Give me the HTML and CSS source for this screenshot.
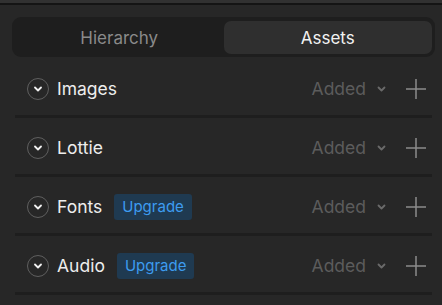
FILE: index.html
```html
<!DOCTYPE html>
<html lang="en">
<head>
    <meta charset="UTF-8">
    <title>Assets</title>
    <link rel="stylesheet" href="styles.css">
</head>
<body>
    <div class="topbar"></div>

    <div class="tabs">
        <div class="tab">Hierarchy</div>
        <div class="tab active">Assets</div>
    </div>

    <div class="list">
        <div class="row">
            <span class="toggle"><svg width="8" height="6" viewBox="0 0 8 6"><path d="M1 1.5 L4 4.5 L7 1.5" /></svg></span>
            <span class="label">Images</span>
            <span class="filter">Added <svg width="9" height="6" viewBox="0 0 9 6"><path d="M1.5 1.5 L4.5 4.5 L7.5 1.5" /></svg></span>
            <span class="add"><svg width="20" height="20" viewBox="0 0 20 20"><path d="M10 0 V20 M0 10 H20" /></svg></span>
        </div>
        <div class="row">
            <span class="toggle"><svg width="8" height="6" viewBox="0 0 8 6"><path d="M1 1.5 L4 4.5 L7 1.5" /></svg></span>
            <span class="label">Lottie</span>
            <span class="filter">Added <svg width="9" height="6" viewBox="0 0 9 6"><path d="M1.5 1.5 L4.5 4.5 L7.5 1.5" /></svg></span>
            <span class="add"><svg width="20" height="20" viewBox="0 0 20 20"><path d="M10 0 V20 M0 10 H20" /></svg></span>
        </div>
        <div class="row">
            <span class="toggle"><svg width="8" height="6" viewBox="0 0 8 6"><path d="M1 1.5 L4 4.5 L7 1.5" /></svg></span>
            <span class="label">Fonts</span>
            <span class="badge">Upgrade</span>
            <span class="filter">Added <svg width="9" height="6" viewBox="0 0 9 6"><path d="M1.5 1.5 L4.5 4.5 L7.5 1.5" /></svg></span>
            <span class="add"><svg width="20" height="20" viewBox="0 0 20 20"><path d="M10 0 V20 M0 10 H20" /></svg></span>
        </div>
        <div class="row">
            <span class="toggle"><svg width="8" height="6" viewBox="0 0 8 6"><path d="M1 1.5 L4 4.5 L7 1.5" /></svg></span>
            <span class="label">Audio</span>
            <span class="badge">Upgrade</span>
            <span class="filter">Added <svg width="9" height="6" viewBox="0 0 9 6"><path d="M1.5 1.5 L4.5 4.5 L7.5 1.5" /></svg></span>
            <span class="add"><svg width="20" height="20" viewBox="0 0 20 20"><path d="M10 0 V20 M0 10 H20" /></svg></span>
        </div>
    </div>
</body>
</html>
```

FILE: styles.css
```css
* {
    margin: 0;
    padding: 0;
    box-sizing: border-box;
}

body {
    font-family: 'Inter', sans-serif;
    background-color: #272727;
    color: #ececec;
    width: 442px;
    height: 305px;
    overflow: hidden;
}

.topbar {
    height: 5px;
    background-color: #313131;
    border-bottom: 2px solid #141414;
}

.tabs {
    display: grid;
    grid-template-columns: 1fr 1fr;
    margin: 12px 7px 0 12px;
    padding: 4px 3px 3px;
    height: 40px;
    background-color: #1e1e1e;
    border-radius: 9px;
}

.tab {
    display: flex;
    align-items: center;
    justify-content: center;
    font-size: 17px;
    color: #8a8a8a;
    border-radius: 7px;
}

.tab.active {
    background-color: #2f2f2f;
    color: #f2f2f2;
}

.list {
    margin: 2px 10px 0 15px;
}

.row {
    display: flex;
    align-items: center;
    height: 59px;
    padding: 3px 6px 0 12px;
    border-bottom: 3px solid #1e1e1e;
}

.toggle {
    display: flex;
    align-items: center;
    justify-content: center;
    width: 22px;
    height: 22px;
    border: 1.5px solid #5f5f5f;
    border-radius: 50%;
    margin-right: 8px;
}

.toggle svg path {
    fill: none;
    stroke: #f0f0f0;
    stroke-width: 1.8;
    stroke-linecap: round;
    stroke-linejoin: round;
}

.label {
    font-size: 17.5px;
    color: #ededed;
}

.badge {
    margin-left: 12px;
    padding: 0 8px;
    height: 26px;
    line-height: 26px;
    font-size: 15px;
    color: #3d9cf0;
    background-color: #1f3a51;
    border-radius: 3px;
}

.filter {
    margin-left: auto;
    display: flex;
    align-items: center;
    gap: 11px;
    font-size: 17.5px;
    color: #5c5c5c;
}

.filter svg path {
    fill: none;
    stroke: #6a6a6a;
    stroke-width: 1.8;
    stroke-linecap: round;
    stroke-linejoin: round;
}

.add {
    display: flex;
    margin-left: 20px;
}

.add svg path {
    fill: none;
    stroke: #8c8c8c;
    stroke-width: 1.5;
}
```
